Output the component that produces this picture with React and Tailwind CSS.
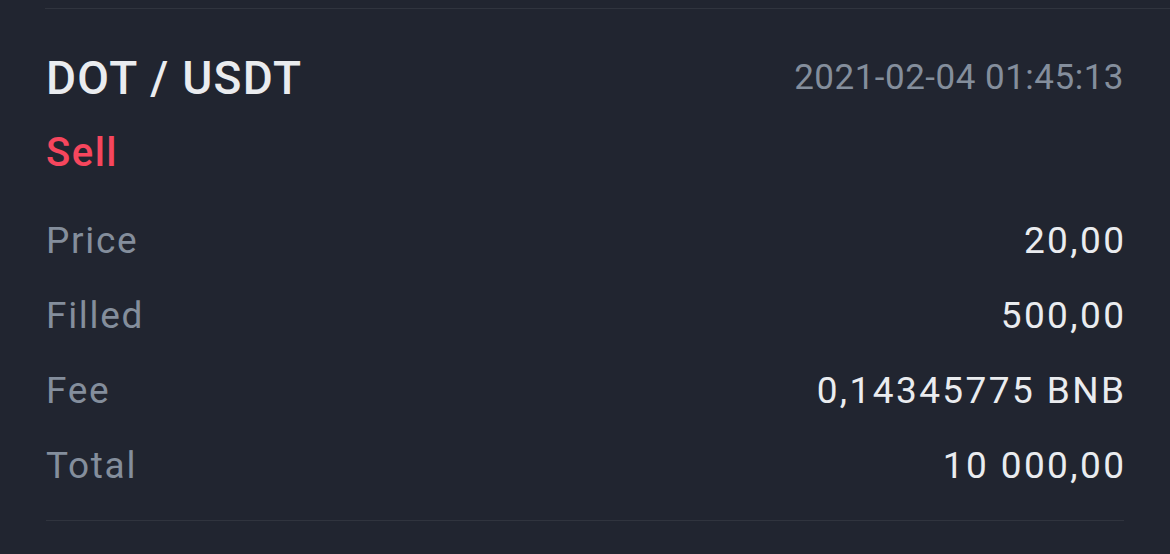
export default function App() {
  const rows = [
    ['Price', '20,00'],
    ['Filled', '500,00'],
    ['Fee', '0,14345775 BNB'],
    ['Total', '10 000,00'],
  ]
  return (
    <div className="w-full h-[554px] bg-[#212530] overflow-hidden font-['Roboto',sans-serif]">
      <div className="pt-[8px] pl-[45px]">
        <div className="h-px bg-[#30343e]" />
      </div>
      <div className="px-[46px]">
        <div className="mt-[41px] h-[56px] flex items-center justify-between">
          <div className="text-[46px] leading-[56px] tracking-[1.3px] text-[#eaecef] font-medium">DOT / USDT</div>
          <div className="text-[35px] leading-[56px] tracking-[0.5px] text-[#848e9c]">2021-02-04 01:45:13</div>
        </div>
        <div className="mt-[23px] text-[40px] leading-[48px] tracking-[1.5px] text-[#f6465d] font-medium">Sell</div>
        <div className="mt-[26px]">
          {rows.map(([label, value]) => (
            <div key={label} className="h-[75px] flex items-center justify-between text-[37px] leading-[75px]">
              <span className="text-[#848e9c] tracking-[1.7px]">{label}</span>
              <span className="text-[#eaecef] tracking-[2.4px] -mr-[2.4px]">{value}</span>
            </div>
          ))}
        </div>
        <div className="mt-[17px] h-px bg-[#30343e]" />
      </div>
    </div>
  )
}
